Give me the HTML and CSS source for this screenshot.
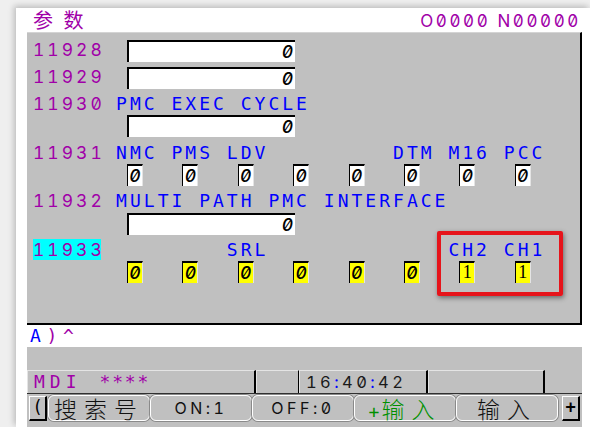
FILE: index.html
```html
<!DOCTYPE html>
<html lang="zh">
<head>
<meta charset="utf-8">
<title>参数</title>
<link rel="stylesheet" href="styles.css">
</head>
<body>
<div class="win">
  <div class="titlebar">
    <span class="title">参 数</span>
    <span class="prog">O0000 N00000</span>
  </div>
  <div class="panel">
    <div class="row row-inline"><span class="lbl">11928</span><span class="field">0</span></div>
    <div class="row row-inline"><span class="lbl">11929</span><span class="field">0</span></div>
    <div class="row row-label"><span class="lbl">11930</span><span class="name">PMC EXEC CYCLE</span></div>
    <div class="row row-box"><span class="lbl"></span><span class="field">0</span></div>
    <div class="row row-label"><span class="lbl">11931</span><span class="name">NMC PMS LDV         DTM M16 PCC</span></div>
    <div class="row row-box"><span class="lbl"></span>
      <div class="bits">
        <span class="bit">0</span><span class="bit">0</span><span class="bit">0</span><span class="bit">0</span>
        <span class="bit">0</span><span class="bit">0</span><span class="bit">0</span><span class="bit">0</span>
      </div>
    </div>
    <div class="row row-label"><span class="lbl">11932</span><span class="name">MULTI PATH PMC INTERFACE</span></div>
    <div class="row row-box"><span class="lbl"></span><span class="field">0</span></div>
    <div class="row row-label row-last"><span class="lbl"><span class="cursor">11933</span></span><span class="name">        SRL             CH2 CH1</span></div>
    <div class="row row-box"><span class="lbl"></span>
      <div class="bits">
        <span class="bit on">0</span><span class="bit on">0</span><span class="bit on">0</span><span class="bit on">0</span>
        <span class="bit on">0</span><span class="bit on">0</span><span class="bit on one">1</span><span class="bit on one">1</span>
      </div>
    </div>
    <div class="highlight"></div>
  </div>
  <div class="inputline"><span class="blue">A</span><span class="purple">)^</span></div>
  <div class="lower">
    <div class="statusrow">
      <div class="cell c1"><span class="mode">MDI</span><span class="stars">****</span></div>
      <div class="cell c2"></div>
      <div class="cell c3">16<span class="blue">:</span>40<span class="blue">:</span>42</div>
      <div class="cell c4"></div>
    </div>
    <div class="keys">
      <div class="sbtn">(</div>
      <div class="key cjk">搜索号</div>
      <div class="key">ON:1</div>
      <div class="key">OFF:0</div>
      <div class="key cjk green"><span class="plus">+</span>输入</div>
      <div class="key cjk">输入</div>
      <div class="sbtn plusbtn">+</div>
    </div>
  </div>
</div>
</body>
</html>
```

FILE: styles.css
```css
html, body {
  margin: 0;
  padding: 0;
}
body {
  background: #efefef;
  width: 590px;
  height: 427px;
  overflow: hidden;
  font-family: "DejaVu Sans Mono", "Liberation Mono", monospace;
}
.win {
  margin: 8px 0 0 16px;
  width: 574px;
  height: 419px;
  background: #ffffff;
  box-shadow: -2px -2px 6px rgba(0, 0, 0, 0.22);
}
.titlebar {
  height: 24px;
  display: flex;
  justify-content: space-between;
  align-items: center;
  padding: 0 9px 0 17px;
}
.title {
  font-family: "Noto Sans CJK SC", sans-serif;
  font-size: 20px;
  line-height: 24px;
  color: #a000a8;
  letter-spacing: 3px;
}
.prog {
  font-family: Inter, "DejaVu Sans Mono", sans-serif;
  font-feature-settings: "tnum" 1, "zero" 1;
  font-size: 17px;
  line-height: 20px;
  letter-spacing: 2.6px;
  color: #a000a8;
  margin-top: 1px;
}
.panel {
  position: relative;
  margin-left: 11px;
  width: 555px;
  height: 293px;
  box-sizing: border-box;
  background: #c0c0c0;
  border-top: 1px solid #d4d4d4;
  border-right: 2px solid #000;
  border-bottom: 2px solid #000;
  padding: 7px 0 0 6px;
}
.row {
  display: flex;
  align-items: flex-start;
  white-space: pre;
  font-size: 18px;
  line-height: 19px;
  letter-spacing: 3.01px;
}
.row-inline { height: 27px; }
.row-label { height: 21.33px; }
.row-box { height: 27.33px; }
.lbl {
  flex: none;
  width: 83.1px;
  color: #a000a8;
  font-family: Inter, "DejaVu Sans Mono", sans-serif;
  font-feature-settings: "tnum" 1, "zero" 1;
  font-size: 17.5px;
  letter-spacing: 3px;
}
.cursor {
  display: inline-block;
  width: 68px;
  height: 21px;
  background: #00ffff;
  margin-top: -1px;
  padding-top: 1px;
  box-sizing: border-box;
}
.name {
  color: #0000ff;
}
.field {
  margin-left: 10.9px;
  width: 168px;
  height: 22px;
  box-sizing: border-box;
  background: #fff;
  border-top: 2px solid #000;
  border-left: 2px solid #000;
  text-align: right;
  padding-right: 2px;
  line-height: 19px;
  letter-spacing: 0;
  color: #000;
  font-family: Inter, "DejaVu Sans Mono", sans-serif;
  font-feature-settings: "tnum" 1, "zero" 1;
  font-style: italic;
  font-weight: 500;
  font-size: 17.5px;
}
.bits {
  display: flex;
  margin-left: 10.9px;
}
.bit {
  width: 16px;
  height: 22px;
  margin-right: 39.4px;
  box-sizing: border-box;
  background: #fff;
  border-top: 2px solid #000;
  border-left: 1px solid #000;
  border-right: 1px solid #e4e4e4;
  text-align: center;
  letter-spacing: 0;
  line-height: 19px;
  color: #000;
  font-family: Inter, "DejaVu Sans Mono", sans-serif;
  font-feature-settings: "tnum" 1, "zero" 1;
  font-style: italic;
  font-weight: 500;
  font-size: 17.5px;
}
.bit.on {
  background: #ffff00;
}
.bit.one {
  font-family: "Liberation Serif", serif;
  font-style: normal;
  font-weight: normal;
  font-size: 18px;
}
.highlight {
  position: absolute;
  left: 410px;
  top: 198px;
  width: 126px;
  height: 65px;
  box-sizing: border-box;
  border: 4px solid #e6141b;
  border-radius: 2px;
  box-shadow: 1px 2px 5px rgba(0, 0, 0, 0.45);
}
.inputline {
  margin-left: 11px;
  height: 22px;
  padding-left: 3px;
  font-size: 18px;
  line-height: 22px;
  letter-spacing: 5.7px;
  white-space: pre;
}
.blue { color: #0000ff; }
.purple { color: #a000a8; }
.lower {
  margin-left: 11px;
  width: 555px;
  height: 80px;
  background: #c0c0c0;
  padding-top: 23px;
  box-sizing: border-box;
}
.statusrow {
  display: flex;
  height: 24px;
  border-bottom: 1px solid #303030;
  box-sizing: border-box;
}
.cell {
  box-sizing: border-box;
  height: 23px;
  border-top: 1px solid #e4e4e4;
  border-left: 1px solid #e4e4e4;
  font-size: 17px;
  line-height: 21px;
  white-space: pre;
  display: flex;
  align-items: center;
}
.c1 { width: 229px; border-right: 2px solid #000; padding-left: 6px; }
.c2 { width: 43px; border-right: 1px solid #000; }
.c3 {
  width: 129px;
  border-right: 2px solid #000;
  padding-left: 6px;
  letter-spacing: 3.4px;
  color: #1a1a1a;
  font-family: Inter, "DejaVu Sans Mono", sans-serif;
  font-feature-settings: "tnum" 1, "zero" 1;
  font-size: 16.5px;
}
.c4 { width: 117px; border-right: 2px solid #000; }
.mode {
  color: #a000a8;
  font-size: 18px;
  line-height: 20px;
  letter-spacing: 5px;
}
.stars {
  color: #a000a8;
  margin-left: 18px;
  font-size: 18px;
  line-height: 20px;
  letter-spacing: 1.8px;
}
.keys {
  display: flex;
  height: 28px;
  padding-left: 2px;
}
.sbtn {
  width: 18px;
  height: 25px;
  margin-top: 2px;
  box-sizing: border-box;
  border-top: 1px solid #fff;
  border-left: 1px solid #fff;
  border-right: 2px solid #000;
  border-bottom: 2px solid #000;
  font-size: 17px;
  line-height: 21px;
  text-align: center;
  color: #000;
}
.key {
  width: 102px;
  height: 26px;
  margin-top: 1px;
  box-sizing: border-box;
  border: 1px solid #fff;
  border-radius: 6px;
  box-shadow: 0 0 0 1px #8a8a8a;
  text-align: center;
  font-family: Inter, "DejaVu Sans Mono", sans-serif;
  font-feature-settings: "tnum" 1, "zero" 1;
  font-size: 16px;
  line-height: 24px;
  letter-spacing: 3.5px;
  color: #111;
}
.sbtn + .key {
  margin-left: 1px;
}
.key.cjk {
  font-family: "Noto Sans CJK SC", sans-serif;
  font-size: 23px;
  line-height: 24px;
  letter-spacing: 7px;
  font-weight: 300;
}
.key.green {
  color: #009000;
}
.plus {
  font-family: "DejaVu Sans Mono", monospace;
  font-size: 18px;
  letter-spacing: 2px;
}
.plusbtn {
  margin-left: 4px;
  font-weight: bold;
}
```
